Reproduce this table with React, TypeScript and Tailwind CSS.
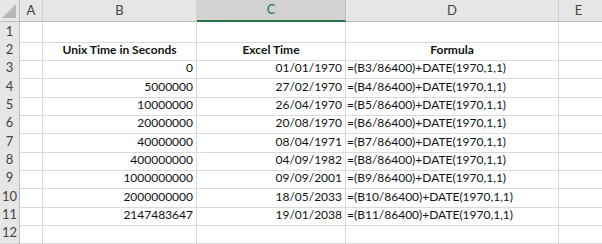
import React from "react";

const COLS = "grid grid-cols-[20px_23px_154px_149px_213px_1fr]";

type Row = { n: number; h: string; b?: string; c?: string; d?: string; bold?: boolean };

const rows: Row[] = [
  { n: 1, h: "h-[18px]" },
  { n: 2, h: "h-[18px]", b: "Unix Time in Seconds", c: "Excel Time", d: "Formula", bold: true },
  { n: 3, h: "h-[19px]", b: "0", c: "01/01/1970", d: "=(B3/86400)+DATE(1970,1,1)" },
  { n: 4, h: "h-[18px]", b: "5000000", c: "27/02/1970", d: "=(B4/86400)+DATE(1970,1,1)" },
  { n: 5, h: "h-[18px]", b: "10000000", c: "26/04/1970", d: "=(B5/86400)+DATE(1970,1,1)" },
  { n: 6, h: "h-[19px]", b: "20000000", c: "20/08/1970", d: "=(B6/86400)+DATE(1970,1,1)" },
  { n: 7, h: "h-[18px]", b: "40000000", c: "08/04/1971", d: "=(B7/86400)+DATE(1970,1,1)" },
  { n: 8, h: "h-[18px]", b: "400000000", c: "04/09/1982", d: "=(B8/86400)+DATE(1970,1,1)" },
  { n: 9, h: "h-[19px]", b: "1000000000", c: "09/09/2001", d: "=(B9/86400)+DATE(1970,1,1)" },
  { n: 10, h: "h-[18px]", b: "2000000000", c: "18/05/2033", d: "=(B10/86400)+DATE(1970,1,1)" },
  { n: 11, h: "h-[18px]", b: "2147483647", c: "19/01/2038", d: "=(B11/86400)+DATE(1970,1,1)" },
  { n: 12, h: "h-[19px]" },
];

export default function App() {
  return (
    <div className="w-[602px] h-[244px] overflow-hidden bg-white font-['Lato',sans-serif] text-[12px] text-[#111]">
      {/* column headers */}
      <div className={`${COLS} h-[22px] bg-[#e6e6e6] text-[#444] text-[13px]`}>
        <div className="relative border-r border-b border-[#bcbcbc]">
          <div className="absolute right-[3px] bottom-[3px] w-0 h-0 border-l-[14px] border-l-transparent border-b-[14px] border-b-[#b7b7b7]" />
        </div>
        <div className="flex items-center justify-center border-r border-b border-[#cfcfcf] border-b-[#bcbcbc]">A</div>
        <div className="flex items-center justify-center border-r border-b border-[#cfcfcf] border-b-[#bcbcbc]">B</div>
        <div className="flex items-center justify-center bg-[#d2d2d2] border-r border-[#bdbdbd] border-b-2 border-b-[#217346] text-[#217346]">C</div>
        <div className="flex items-center justify-center border-r border-b border-[#cfcfcf] border-b-[#bcbcbc]">D</div>
        <div className="flex items-center justify-center border-b border-[#bcbcbc] pr-[4px]">E</div>
      </div>
      {rows.map((r) => (
        <div key={r.n} className={`${COLS} ${r.h}`}>
          <div className="flex items-center justify-center bg-[#e6e6e6] text-[#444] text-[13px] border-r border-b border-[#bcbcbc] border-b-[#d0d0d0]">
            {r.n}
          </div>
          <div className="border-r border-b border-[#dadada]" />
          <div
            className={`flex items-center border-r border-b border-[#dadada] ${
              r.bold ? "justify-center font-bold" : "justify-end pr-[3px]"
            }`}
          >
            {r.b}
          </div>
          <div
            className={`flex items-center border-r border-b border-[#dadada] ${
              r.bold ? "justify-center font-bold" : "justify-end pr-[3px]"
            }`}
          >
            {r.c}
          </div>
          <div
            className={`flex items-center border-r border-b border-[#dadada] whitespace-nowrap ${
              r.bold ? "justify-center font-bold" : "justify-start pl-[1px]"
            }`}
          >
            {r.d}
          </div>
          <div className="border-b border-[#dadada]" />
        </div>
      ))}
    </div>
  );
}
